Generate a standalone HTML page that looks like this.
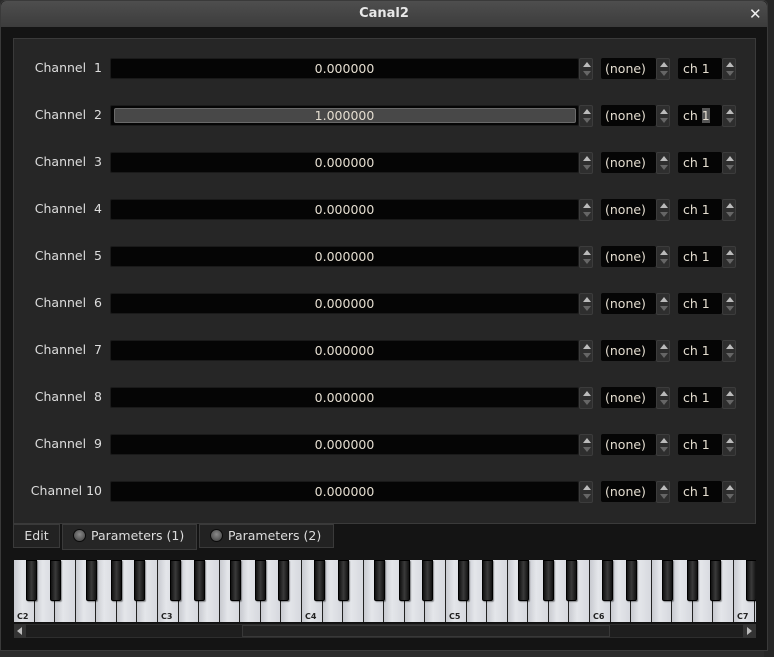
<!DOCTYPE html>
<html><head><meta charset="utf-8"><style>
*{margin:0;padding:0;box-sizing:border-box}
body{width:774px;height:657px;background:#2b2b2b;position:relative;overflow:hidden;font-family:"DejaVu Sans","Liberation Sans",sans-serif;font-size:12.5px;color:#ddd}
.abs{position:absolute}
#side{left:764px;top:0;width:10px;height:657px;background:#262626}
#win{left:0;top:0;width:768px;height:651px;background:#141414;border:1px solid #3a3a3a;border-radius:5px 5px 0 0}
#title{left:0;top:0;width:766px;height:26px;background:linear-gradient(#4e4e4e,#3c3c3c);border-radius:5px 5px 0 0;text-align:center;line-height:26px;font-weight:bold;color:#e8e8e8;font-size:13px}
#x{left:748px;top:4px;font-size:15px;font-weight:bold;color:#eee}
#panel{left:13px;top:38px;width:743px;height:486px;background:#262626;border:1px solid #3a3a3a}
.lbl{width:90px;text-align:right;color:#ddd}
.sl{left:110px;width:469px;height:21px;background:#050505;border:1px solid #1a1a1a;border-radius:2px;text-align:center;line-height:19px;color:#e4ddd0}
.fill{position:absolute;left:3px;top:2px;right:2px;bottom:2px;background:#484848;border:1px solid #6a6a6a;border-radius:2px}
.sp{width:14px;height:22px;background:#2e2e2e;border:1px solid #3c3c3c;border-radius:2px}
.sp:before{content:"";position:absolute;left:3px;top:3px;border:4px solid transparent;border-bottom:5px solid #bbb;border-top:0}
.sp:after{content:"";position:absolute;left:3px;top:12px;border:4px solid transparent;border-top:5px solid #666;border-bottom:0}
.bx{height:21px;background:#050505;border-radius:2px;line-height:21px;color:#e4ddd0}
.tab{height:24px;border:1px solid #3a3a3a;background:#222;line-height:22px;color:#ddd}
.rad{display:inline-block;width:13px;height:13px;min-width:13px;border-radius:50%;background:radial-gradient(circle at 50% 40%,#8a8a8a,#3a3a3a);border:1px solid #0a0a0a;vertical-align:-2px;margin-right:5px}
#kb{left:14px;top:560px;width:742px;height:63px;background:#111;overflow:hidden}
.w{position:absolute;top:0;height:62px;background:linear-gradient(90deg,#c8cad0,#e4e6ea 40%,#d6d8de);border-right:1px solid #222}
.b{position:absolute;top:0;height:41px;background:linear-gradient(90deg,#111,#3a3a3a 50%,#111);border:1px solid #000;border-radius:0 0 2px 2px;box-shadow:1px 1px 1px rgba(0,0,0,.4)}
.kl{position:absolute;top:52px;font-size:8px;font-weight:bold;color:#222}
</style></head><body>
<div id="side" class="abs"></div>
<div id="win" class="abs">
<div id="title" class="abs">Canal2</div>
<div id="x" class="abs">✕</div>
</div>
<div id="panel" class="abs"></div>

<div class="abs lbl" style="left:12px;top:60px">Channel&nbsp; 1</div>
<div class="abs lbl" style="left:12px;top:107px">Channel&nbsp; 2</div>
<div class="abs lbl" style="left:12px;top:154px">Channel&nbsp; 3</div>
<div class="abs lbl" style="left:12px;top:201px">Channel&nbsp; 4</div>
<div class="abs lbl" style="left:12px;top:248px">Channel&nbsp; 5</div>
<div class="abs lbl" style="left:12px;top:295px">Channel&nbsp; 6</div>
<div class="abs lbl" style="left:12px;top:342px">Channel&nbsp; 7</div>
<div class="abs lbl" style="left:12px;top:389px">Channel&nbsp; 8</div>
<div class="abs lbl" style="left:12px;top:436px">Channel&nbsp; 9</div>
<div class="abs lbl" style="left:12px;top:483px">Channel 10</div>

<div class="abs sl" style="top:58px">0.000000</div>
<div class="abs sl" style="top:105px"><div class="fill"></div><span style="position:relative">1.000000</span></div>
<div class="abs sl" style="top:152px">0.000000</div>
<div class="abs sl" style="top:199px">0.000000</div>
<div class="abs sl" style="top:246px">0.000000</div>
<div class="abs sl" style="top:293px">0.000000</div>
<div class="abs sl" style="top:340px">0.000000</div>
<div class="abs sl" style="top:387px">0.000000</div>
<div class="abs sl" style="top:434px">0.000000</div>
<div class="abs sl" style="top:481px">0.000000</div>

<div id="rows"></div>

<div class="abs bx" style="left:601px;top:58px;width:55px;padding-left:4px">(none)</div><div class="abs bx" style="left:678px;top:58px;width:44px;padding-left:5px">ch 1</div>
<div class="abs bx" style="left:601px;top:105px;width:55px;padding-left:4px">(none)</div><div class="abs bx" style="left:678px;top:105px;width:44px;padding-left:5px">ch <span style="background:#555">1</span></div>
<div class="abs bx" style="left:601px;top:152px;width:55px;padding-left:4px">(none)</div><div class="abs bx" style="left:678px;top:152px;width:44px;padding-left:5px">ch 1</div>
<div class="abs bx" style="left:601px;top:199px;width:55px;padding-left:4px">(none)</div><div class="abs bx" style="left:678px;top:199px;width:44px;padding-left:5px">ch 1</div>
<div class="abs bx" style="left:601px;top:246px;width:55px;padding-left:4px">(none)</div><div class="abs bx" style="left:678px;top:246px;width:44px;padding-left:5px">ch 1</div>
<div class="abs bx" style="left:601px;top:293px;width:55px;padding-left:4px">(none)</div><div class="abs bx" style="left:678px;top:293px;width:44px;padding-left:5px">ch 1</div>
<div class="abs bx" style="left:601px;top:340px;width:55px;padding-left:4px">(none)</div><div class="abs bx" style="left:678px;top:340px;width:44px;padding-left:5px">ch 1</div>
<div class="abs bx" style="left:601px;top:387px;width:55px;padding-left:4px">(none)</div><div class="abs bx" style="left:678px;top:387px;width:44px;padding-left:5px">ch 1</div>
<div class="abs bx" style="left:601px;top:434px;width:55px;padding-left:4px">(none)</div><div class="abs bx" style="left:678px;top:434px;width:44px;padding-left:5px">ch 1</div>
<div class="abs bx" style="left:601px;top:481px;width:55px;padding-left:4px">(none)</div><div class="abs bx" style="left:678px;top:481px;width:44px;padding-left:5px">ch 1</div>

<div class="abs tab" style="left:13px;top:524px;width:47px;text-align:center">Edit</div>
<div class="abs tab" style="left:62px;top:524px;width:135px;height:26px;background:#262626;padding-left:10px">
<span class="rad"></span>Parameters (1)</div>
<div class="abs tab" style="left:199px;top:524px;width:135px;padding-left:10px"><span class="rad"></span>Parameters (2)</div>

<div id="kb" class="abs">
<div class="kl" style="left:3px">C2</div>
</div>
<div class="abs" style="left:14px;top:624px;width:742px;height:14px;background:#1e1e1e;border:1px solid #2e2e2e"></div>
<div class="abs" style="left:14px;top:624px;width:12px;height:14px;background:#333"></div>
<div class="abs" style="left:17px;top:627px;border:4px solid transparent;border-right:5px solid #bbb;border-left:0"></div>
<div class="abs" style="left:242px;top:625px;width:368px;height:12px;background:#232323;border:1px solid #383838"></div>
<div class="abs" style="left:743px;top:624px;width:13px;height:14px;background:#333"></div>
<div class="abs" style="left:747px;top:627px;border:4px solid transparent;border-left:5px solid #bbb;border-right:0"></div>

<script>
var r=document.getElementById('rows'),h='';
for(var i=0;i<10;i++){var t=58+47*i;
h+='<div class="abs sp" style="left:579px;top:'+t+'px"></div><div class="abs sp" style="left:656px;top:'+t+'px"></div><div class="abs sp" style="left:722px;top:'+t+'px"></div>';}
r.innerHTML=h;
var kb=document.getElementById('kb'),k='',W=144/7;
for(var j=0;j<37;j++){k+='<div class="w" style="left:'+(j*W)+'px;width:'+W+'px"></div>';}
var bo=[0.6,1.77,3.52,4.72,5.85];
for(var o=0;o<6;o++){for(var b=0;b<5;b++){var x=o*144+bo[b]*W;if(x<742)k+='<div class="b" style="left:'+x+'px;width:11px"></div>';}
k+='<div class="kl" style="left:'+(o*144+3)+'px">C'+(o+2)+'</div>';}
kb.innerHTML=k;
</script>
</body></html>
